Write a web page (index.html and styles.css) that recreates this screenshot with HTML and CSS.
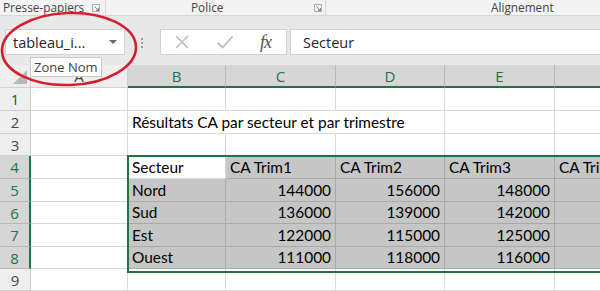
FILE: index.html
```html
<!DOCTYPE html>
<html lang="fr">
<head>
<meta charset="utf-8">
<title>Zone Nom</title>
<link rel="stylesheet" href="styles.css">
</head>
<body>
<div class="app">
  <div class="ribbon">
    <div class="grp g1"><span class="lbl">Presse-papiers</span><svg class="launch" viewBox="0 0 8 8" width="8" height="8"><path d="M0.5 0.5h7v7h-7z" fill="none" stroke="#9a9a9a" stroke-width="0.8"/><path d="M2.5 2.5l4 4M6.5 4v2.5h-2.5" fill="none" stroke="#777" stroke-width="0.9"/></svg></div>
    <div class="grp g2"><span class="lbl">Police</span><svg class="launch" viewBox="0 0 8 8" width="8" height="8"><path d="M0.5 0.5h7v7h-7z" fill="none" stroke="#9a9a9a" stroke-width="0.8"/><path d="M2.5 2.5l4 4M6.5 4v2.5h-2.5" fill="none" stroke="#777" stroke-width="0.9"/></svg></div>
    <div class="grp g3"><span class="lbl">Alignement</span></div>
  </div>
  <div class="fbar">
    <div class="namebox"><span class="nbtext">tableau_i...</span><span class="arrow"></span></div>
    <div class="dots"><i></i><i></i><i></i></div>
    <div class="fbtns">
      <svg class="ico" viewBox="0 0 16 16" width="16" height="16"><path d="M2 2l12 12M14 2L2 14" stroke="#bdbdbd" stroke-width="1.6" fill="none"/></svg>
      <svg class="ico" viewBox="0 0 18 16" width="18" height="16"><path d="M1.5 8.5l5 5L16.5 2.5" stroke="#bdbdbd" stroke-width="1.8" fill="none"/></svg>
      <span class="fx">fx</span>
    </div>
    <div class="finput">Secteur</div>
  </div>
  <div class="sheet">
    <div class="c h corner"></div><div class="c h">A</div><div class="c h hs col">B</div><div class="c h hs col">C</div><div class="c h hs col">D</div><div class="c h hs col">E</div><div class="c h hs col"></div>

    <div class="c h">1</div><div class="c"></div><div class="c"></div><div class="c"></div><div class="c"></div><div class="c"></div><div class="c"></div>

    <div class="c h">2</div><div class="c"></div><div class="c nob">Résultats CA par secteur et par trimestre</div><div class="c nob"></div><div class="c"></div><div class="c"></div><div class="c"></div>

    <div class="c h">3</div><div class="c"></div><div class="c"></div><div class="c"></div><div class="c"></div><div class="c"></div><div class="c"></div>

    <div class="c h hs row">4</div><div class="c"></div><div class="c active">Secteur</div><div class="c g">CA Trim1</div><div class="c g">CA Trim2</div><div class="c g">CA Trim3</div><div class="c g">CA Trim4</div>

    <div class="c h hs row">5</div><div class="c"></div><div class="c g">Nord</div><div class="c g n">144000</div><div class="c g n">156000</div><div class="c g n">148000</div><div class="c g"></div>

    <div class="c h hs row">6</div><div class="c"></div><div class="c g">Sud</div><div class="c g n">136000</div><div class="c g n">139000</div><div class="c g n">142000</div><div class="c g"></div>

    <div class="c h hs row">7</div><div class="c"></div><div class="c g">Est</div><div class="c g n">122000</div><div class="c g n">115000</div><div class="c g n">125000</div><div class="c g"></div>

    <div class="c h hs row">8</div><div class="c"></div><div class="c g">Ouest</div><div class="c g n">111000</div><div class="c g n">118000</div><div class="c g n">116000</div><div class="c g"></div>

    <div class="c h">9</div><div class="c"></div><div class="c"></div><div class="c"></div><div class="c"></div><div class="c"></div><div class="c"></div>

    <div class="selection"></div>
  </div>
  <div class="tooltip">Zone Nom</div>
  <svg class="circle" viewBox="0 0 142 80" width="142" height="80"><ellipse cx="69" cy="38" rx="67" ry="36" fill="none" stroke="#d4202c" stroke-width="2.6" transform="rotate(-2 69 38)"/></svg>
</div>
</body>
</html>
```
FILE: styles.css
```css
html, body {
  margin: 0;
  padding: 0;
}
body {
  width: 600px;
  height: 291px;
  overflow: hidden;
  background: #ffffff;
}
.app {
  position: relative;
  width: 600px;
  height: 291px;
  overflow: hidden;
  font-family: "Open Sans", "Noto Sans", sans-serif;
}
.ribbon {
  display: flex;
  height: 15px;
  background: #f3f3f3;
  border-bottom: 1px solid #d6d6d6;
}
.grp {
  display: flex;
  align-items: center;
  box-sizing: border-box;
  height: 15px;
  border-right: 1px solid #d6d6d6;
}
.lbl {
  font-size: 11.8px;
  line-height: 15px;
  color: #444444;
  white-space: nowrap;
}
.g1 {
  width: 106px;
  padding-left: 3px;
}
.g1 .launch {
  margin-left: 8px;
}
.g2 {
  width: 220px;
  padding-left: 85px;
}
.g2 .launch {
  margin-left: 91px;
}
.g3 {
  flex: 1;
  border-right: none;
  padding-left: 165px;
}
.fbar {
  display: flex;
  align-items: flex-start;
  height: 49px;
  box-sizing: border-box;
  padding: 13px 0 0 5px;
  background: #e8e8e8;
}
.namebox {
  display: flex;
  align-items: center;
  box-sizing: border-box;
  width: 120px;
  height: 26px;
  background: #ffffff;
  border: 1px solid #d0d0d0;
  padding-left: 7px;
}
.nbtext {
  font-size: 14.5px;
  color: #262626;
  flex: 1;
}
.arrow {
  width: 0;
  height: 0;
  border-left: 4px solid transparent;
  border-right: 4px solid transparent;
  border-top: 4px solid #6a6a6a;
  margin-right: 7px;
}
.dots {
  display: flex;
  flex-direction: column;
  gap: 2px;
  margin: 9px 0 0 16px;
  width: 19px;
}
.dots i {
  display: block;
  width: 2px;
  height: 2px;
  background: #a0a0a0;
}
.fbtns {
  display: flex;
  align-items: center;
  box-sizing: border-box;
  width: 127px;
  height: 26px;
  background: #ffffff;
  border: 1px solid #d0d0d0;
  padding-left: 13px;
}
.ico {
  display: block;
}
.ico + .ico {
  margin-left: 26px;
}
.fx {
  font-family: "Liberation Serif", "DejaVu Serif", serif;
  font-style: italic;
  font-size: 18px;
  color: #555555;
  margin-left: 26px;
  letter-spacing: -1px;
}
.finput {
  display: flex;
  align-items: center;
  box-sizing: border-box;
  flex: 1;
  height: 26px;
  margin-left: 3px;
  background: #ffffff;
  border: 1px solid #d0d0d0;
  border-right: none;
  padding-left: 12px;
  font-size: 14.5px;
  color: #262626;
}
.sheet {
  position: relative;
  display: grid;
  grid-template-columns: 31px 97px 98px 110px 109px 110px 110px;
  grid-template-rows: 23px 23px 23px 22px 23px 23px 22px 23px 22px 22px;
  width: 665px;
}
.c {
  box-sizing: border-box;
  display: flex;
  align-items: flex-end;
  padding: 0 4px 1px 4px;
  border-right: 1px solid #d9d9d9;
  border-bottom: 1px solid #d9d9d9;
  font-family: "Lato", "Liberation Sans", sans-serif;
  font-size: 15.4px;
  line-height: 20px;
  color: #000000;
  white-space: nowrap;
  min-width: 0;
}
.nob {
  border-right-color: transparent;
  overflow: visible;
}
.h {
  justify-content: center;
  align-items: center;
  padding: 0;
  background: #efefef;
  border-color: #cfcfcf;
  font-family: "Open Sans", "Noto Sans", sans-serif;
  font-size: 15px;
  color: #444444;
}
.hs {
  background: #d6d6d6;
  color: #217346;
  border-color: #b8b8b8;
}
.col {
  border-bottom: 2px solid #217346;
}
.row {
  border-right: 2px solid #217346;
}
.corner {
  position: relative;
  background: #efefef;
}
.corner::after {
  content: "";
  position: absolute;
  right: 3px;
  bottom: 3px;
  width: 0;
  height: 0;
  border-left: 14px solid transparent;
  border-bottom: 14px solid #b8b8b8;
}
.g {
  background: #c6c6c6;
  border-color: #a9a9a9;
}
.n {
  justify-content: flex-end;
}
.active {
  background: #ffffff;
}
.selection {
  position: absolute;
  left: 127px;
  top: 90px;
  width: 520px;
  height: 114px;
  border: 2px solid #217346;
  pointer-events: none;
}
.tooltip {
  position: absolute;
  left: 30px;
  top: 57px;
  box-sizing: border-box;
  height: 20px;
  padding: 0 3px;
  background: #ffffff;
  border: 1px solid #c8c8c8;
  font-family: "Open Sans", "Noto Sans", sans-serif;
  font-size: 13px;
  line-height: 18px;
  color: #444444;
}
.circle {
  position: absolute;
  left: 0;
  top: 11px;
  pointer-events: none;
}
```
